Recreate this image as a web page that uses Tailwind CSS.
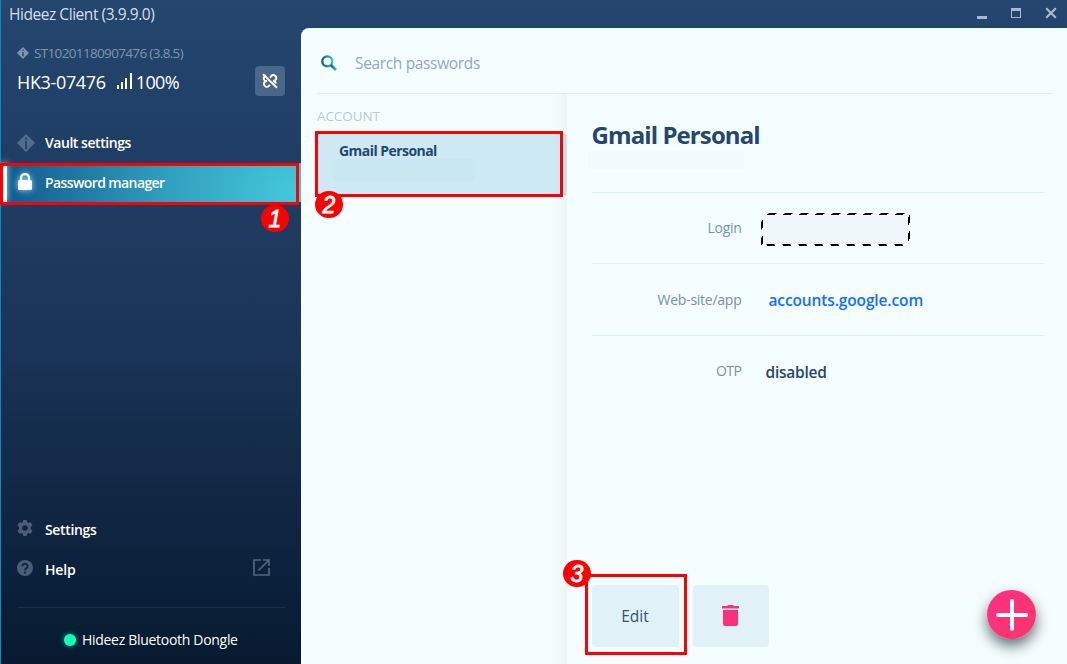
<!DOCTYPE html>
<html lang="en">
<head>
<meta charset="utf-8">
<title>Hideez Client</title>
<script src="https://cdn.jsdelivr.net/npm/@tailwindcss/browser@4"></script>
</head>
<body class="relative flex h-[664px] w-[1067px] flex-col overflow-hidden bg-linear-to-b from-[#24466f] via-[#1b3559] to-[#071a30] font-['Open_Sans','Noto_Sans',sans-serif]">

<header class="flex h-7 shrink-0 items-center justify-between border-l border-[#0f87c4] pr-2.5 pl-2">
  <h1 class="mb-px text-[15.5px] leading-[26px] tracking-[-0.45px] whitespace-nowrap text-[#d5dfea]">Hideez Client (3.9.9.0)</h1>
  <div class="mb-0.5 flex h-[26px] items-center gap-6 text-[#a9b8cb]">
    <svg class="mt-1 h-3 w-[10px]" viewBox="0 0 10 12"><path d="M0 7h10v3H0z" fill="currentColor"/></svg>
    <svg class="h-3 w-[10px]" viewBox="0 0 10 12"><path d="M0 1h10v10H0zM1 4v6h8V4z" fill="currentColor" fill-rule="evenodd"/></svg>
    <svg class="h-3 w-3" viewBox="0 0 12 12"><path d="M1.2 1.2l9.6 9.6M10.8 1.2l-9.6 9.6" stroke="currentColor" stroke-width="2.2"/></svg>
  </div>
</header>

<div class="flex min-h-0 flex-1">
  <aside class="flex w-[301px] shrink-0 flex-col border-l border-[#0f87c4] text-white">
    <section class="flex h-[94px] justify-between pt-4 pr-4 pl-4">
      <div>
        <p class="flex h-[18px] items-center gap-[5px] text-[13.5px] tracking-[-0.65px] whitespace-nowrap text-[#7f95af]">
          <svg class="h-3 w-3" viewBox="0 0 12 12"><path d="M6 0l6 6-6 6-6-6z" fill="currentColor"/><path d="M6 2.5v1.3M6 5v4.2" stroke="#24456e" stroke-width="1.4"/></svg>
          <span class="pt-px">ST10201180907476 (3.8.5)</span>
        </p>
        <p class="mt-1.5 flex h-7 items-center text-[18px] whitespace-nowrap">
          <span class="tracking-[-0.35px]">HK3-07476</span>
          <svg class="mr-1 ml-[11px] mb-0.5 h-4 w-[15px]" viewBox="0 0 15 16" fill="currentColor"><path d="M0 12h2v4H0zM4 9h2v7H4zM8 5h2v11H8zM13 0h2v16h-2z"/></svg>
          <span class="tracking-[-0.6px]">100%</span>
        </p>
      </div>
      <button class="mt-[22px] flex size-[30px] items-center justify-center rounded bg-[#4a6689]">
        <svg class="size-4" viewBox="0 0 16 16" fill="none" stroke="currentColor" stroke-width="1.900"><path d="M4.200 2.500A2.900 2.900 0 0 0 2.600 7.400Q3.600 8.200 5 8Q2 8 1.900 11a2.900 2.900 0 0 0 4.900 2L8 11.800M8 4.600L9.200 3a2.900 2.900 0 0 1 4.700 3.300Q13.200 7.800 11 8Q13.600 8.200 14 10.500M1 1.200l14 13.600"/></svg>
      </button>
    </section>

    <nav class="text-sm font-semibold">
      <a class="flex h-[41px] items-center gap-2.5 pl-4">
        <svg class="size-[18px]" viewBox="0 0 18 18"><path d="M9 0l9 9-9 9-9-9z" fill="#546c8b"/><path d="M9 3.500v2.200M9 7v8" stroke="#1f3d64" stroke-width="1.600"/></svg>
        <span class="tracking-[-0.45px]">Vault settings</span>
      </a>
      <a class="relative flex h-[39px] items-center bg-[radial-gradient(circle_285px_at_98%_80%,#44c8db_0%,#319fbe_45%,#145c90_100%)] pl-4">
        <i class="absolute top-0 left-0 h-full w-1.5 bg-white shadow-[0_0_6px_#9ae3ef]"></i>
        <svg class="mr-3 mb-0.5 h-[17px] w-4 drop-shadow-[0_0_3px_#8cecf4]" viewBox="0 0 16 17"><path d="M4 8V5a4 4 0 0 1 8 0v3" fill="none" stroke="#fff" stroke-width="2.300"/><rect x="1" y="7" width="14" height="10" rx="1.500" fill="#fff"/></svg>
        <span class="tracking-[-0.6px]">Password manager</span>
      </a>
    </nav>

    <nav class="mt-auto text-sm font-semibold">
      <a class="flex h-10 items-center gap-3 pl-4">
        <svg class="mb-1 size-4 text-[#4b5e76]" viewBox="0 0 16 16" fill="currentColor"><path fill-rule="evenodd" d="M6.300 0h3.400l.5 2.200 1.300.8 2.300-.7 1.700 3-1.700 1.600v2.200l1.700 1.600-1.700 3-2.300-.7-1.300.8-.5 2.200H6.300l-.5-2.200-1.300-.8-2.300.7-1.700-3 1.700-1.600V6.900L.5 5.300l1.700-3 2.300.7 1.300-.8zM8 5.200a2.800 2.800 0 1 0 0 5.600 2.800 2.800 0 0 0 0-5.600z"/></svg>
        <span class="tracking-[-0.35px]">Settings</span>
      </a>
      <a class="flex h-10 items-center gap-3 pr-[31.500px] pl-4">
        <svg class="mb-1 size-4" viewBox="0 0 16 16"><circle cx="8" cy="8" r="8" fill="#4b5e76"/><path d="M5.400 6.200a2.600 2.400 0 1 1 4 2C8.400 8.900 8 9.200 8 10.200M8 11.500v2" fill="none" stroke="#0e2441" stroke-width="1.900"/></svg>
        <span class="tracking-[-0.2px]">Help</span>
        <svg class="mb-[5px] ml-auto size-[17px]" viewBox="0 0 17 17" fill="none" stroke="#53657c" stroke-width="1.700"><path d="M8 1H1v15h15V9M10 1h6v6M16 1L5.500 11.500"/></svg>
      </a>
      <div class="mt-[17px] mr-4 ml-4 h-px bg-[#1c3048]"></div>
      <p class="flex h-[56px] items-center gap-1.5 pb-px pt-2 pl-[63px] font-normal whitespace-nowrap">
        <i class="size-3 rounded-full bg-[#12ffb5] shadow-[0_0_5px_#12ffb5aa]"></i>
        <span class="tracking-[-0.3px]">Hideez Bluetooth Dongle</span>
      </p>
    </nav>
  </aside>

  <main class="flex min-w-0 flex-1 flex-col rounded-tl-lg bg-[#f5feff]">
    <label class="mr-[15px] ml-4 flex h-[66px] shrink-0 items-center border-b border-[#d9edf6] pt-1.5 pl-1">
      <svg class="mr-[18px] mb-0.5 size-4" viewBox="0 0 16 16" fill="none"><defs><linearGradient id="lens"><stop stop-color="#11608f"/><stop offset="1" stop-color="#3abbd2"/></linearGradient></defs><g stroke="url(#lens)"><circle cx="6.300" cy="6.300" r="5" stroke-width="2.300"/><path d="M10 10l5 5" stroke-width="2.800"/></g></svg>
      <span class="text-[15.5px] tracking-[-0.35px] text-[#94a8bd]">Search passwords</span>
    </label>

    <div class="flex min-h-0 flex-1">
      <section class="relative w-[266px] shrink-0">
        <h2 class="h-[40px] pt-3 pl-4 text-[13.5px] leading-5 tracking-[-0.1px] text-[#b9cbd8]">ACCOUNT</h2>
        <article class="ml-4 h-[61px] bg-[#cdeaf4] pt-[7px]">
          <h3 class="pl-[22px] text-sm leading-5 font-bold tracking-[-0.55px] text-[#24466f]">Gmail Personal</h3>
          <div class="-mt-[2px] ml-4 h-[23px] w-[142px] bg-[#c9e7f1]"></div>
        </article>
        <i class="absolute top-0 right-0 h-full w-4 bg-linear-to-r from-transparent to-[#5078820f]"></i>
      </section>

      <section class="flex min-w-0 flex-1 flex-col pr-[23px] pl-[24.500px]">
        <div class="h-[99px] shrink-0 border-b border-[#d6f0fb] pt-[25px]">
          <h2 class="text-2xl leading-8 font-bold tracking-[-0.9px] text-[#24466f]">Gmail Personal</h2>
          <div class="-ml-1 h-[18px] w-[156px] bg-[#f2fafd]"></div>
        </div>
        <dl>
          <div class="flex h-[71px] items-center border-b border-[#e0f4f7]">
            <dt class="w-[150px] text-right text-sm tracking-[-0.3px] text-[#7690ab]">Login</dt>
            <dd class="mt-[3px] ml-[19.500px] h-[33px] w-[149px]">
              <svg class="h-[33px] w-[149px]" viewBox="0 0 149 33"><rect x="1" y="1" width="147" height="31" fill="#f0f7fb" stroke="#fff" stroke-width="2"/><g fill="none" stroke="#000" stroke-dasharray="8 8"><path d="M7.500.5H148.500M5.500 31.500H148"/><path d="M6 1.500H148M6 32.500H148"/><path d="M.5 8.500V32M147.500 4V32"/><path d="M1.500 7V32M148.500 2V32"/></g></svg>
            </dd>
          </div>
          <div class="flex h-[72px] items-center border-b border-[#d9eff7]">
            <dt class="w-[150px] text-right text-sm tracking-[-0.25px] text-[#7690ab]">Web-site/app</dt>
            <dd class="mt-[3px] ml-[27px] text-[15.5px] font-semibold tracking-[-0.13px] text-[#146eff]">accounts.google.com</dd>
          </div>
          <div class="flex h-[72px] items-center pb-0.5">
            <dt class="w-[150px] text-right text-sm tracking-[-0.5px] text-[#7690ab]">OTP</dt>
            <dd class="mt-1 ml-6 text-[15.5px] font-semibold tracking-[-0.25px] text-[#24466f]">disabled</dd>
          </div>
        </dl>
        <footer class="mt-auto mb-[17.500px] flex items-end gap-3.5">
          <button class="h-[62px] w-[87px] rounded bg-[#e1f1f8] pt-0.5 text-[15.5px] text-[#315579]">Edit</button>
          <button class="flex h-[62px] w-[76px] items-center justify-center rounded bg-[#e1f1f8]">
            <svg class="h-[21px] w-[17px]" viewBox="0 0 17 21" fill="#ff2f7f"><path d="M0 1h5l1-1h5l1 1h5v2.500H0zM1 5h15v14q0 2-2 2H3q-2 0-2-2z"/></svg>
          </button>
        </footer>
      </section>
    </div>
  </main>
</div>

<button class="absolute top-[590px] left-[987px] flex size-[49px] items-center justify-center rounded-full bg-linear-to-br from-[#ff2d85] to-[#f8376c] shadow-[0_7px_14px_rgba(20,40,45,0.65)]">
  <svg class="size-8" viewBox="0 0 32 32"><path d="M16 2v28M2 16h28" stroke="#fff" stroke-width="4" stroke-linecap="round"/></svg>
</button>

<div class="absolute top-[162.500px] left-0 h-[42px] w-[299px] border-3 border-[#ff0000]"></div>
<div class="absolute top-[131px] left-[315px] h-[66px] w-[248px] border-3 border-[#ff0000]"></div>
<div class="absolute top-[574px] left-[585px] h-[81px] w-[102px] border-3 border-[#ff0000]"></div>
<span class="absolute top-[205px] left-[261px] flex h-[27px] w-7 items-center justify-center rounded-full bg-[#ff0000] pt-0.5 font-['Liberation_Sans',sans-serif] text-[23px] font-normal text-white italic [-webkit-text-stroke:0.8px_white]">1</span>
<span class="absolute top-[191px] left-[315px] flex h-[27px] w-7 items-center justify-center rounded-full bg-[#ff0000] pt-0.5 font-['Liberation_Sans',sans-serif] text-[23px] font-normal text-white italic [-webkit-text-stroke:0.8px_white]">2</span>
<span class="absolute top-[560px] left-[563px] flex h-[27px] w-7 items-center justify-center rounded-full bg-[#ff0000] pt-0.5 font-['Liberation_Sans',sans-serif] text-[23px] font-normal text-white italic [-webkit-text-stroke:0.8px_white]">3</span>
</body>
</html>
